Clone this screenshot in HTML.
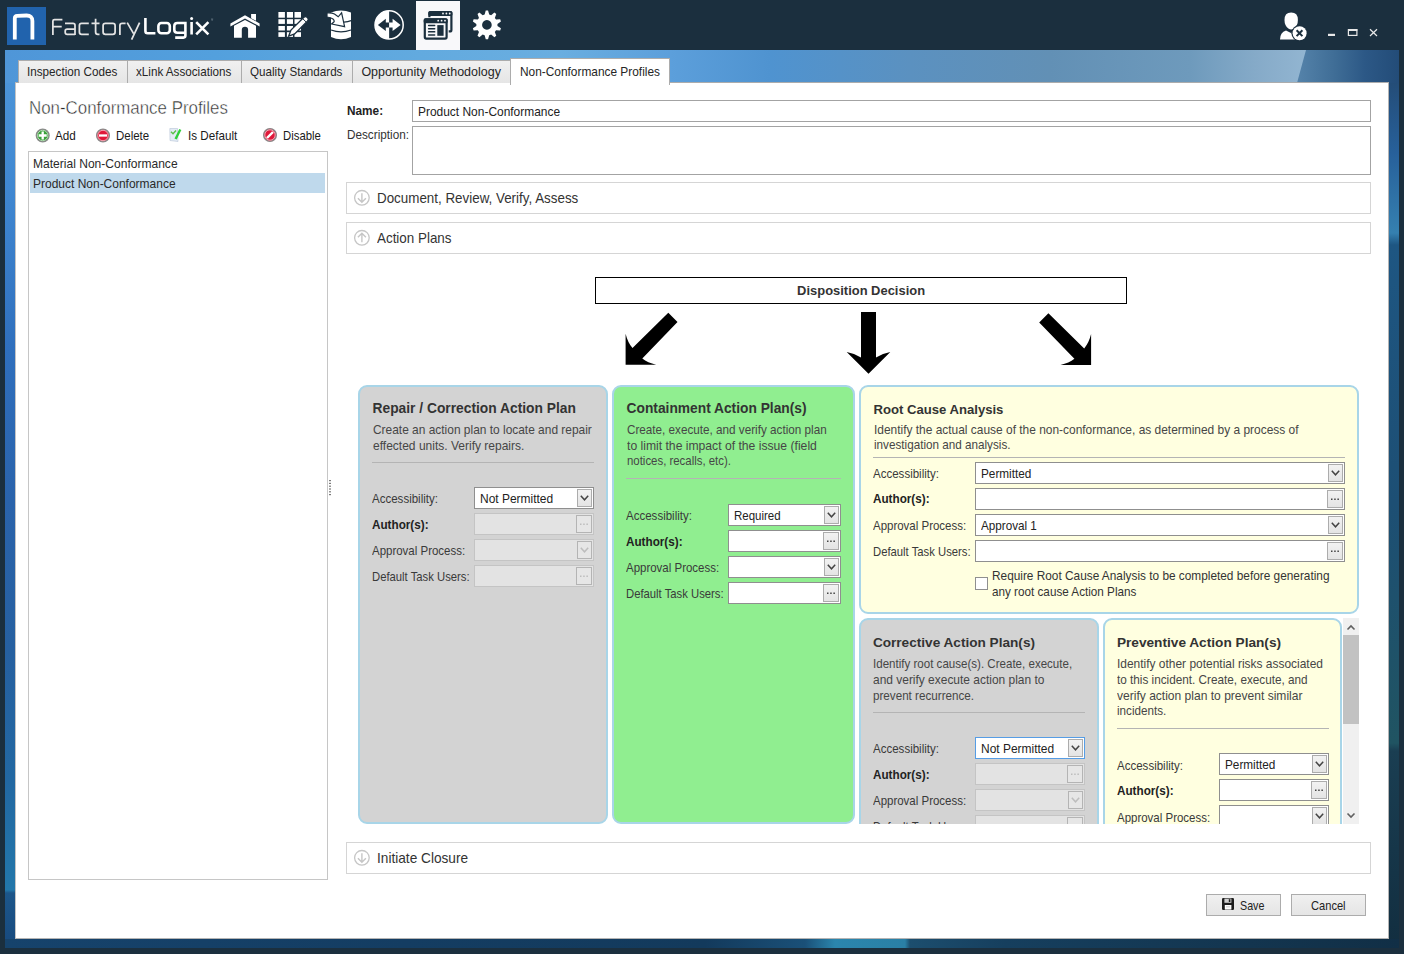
<!DOCTYPE html><html><head><meta charset="utf-8"><style>
html,body{margin:0;padding:0;width:1404px;height:954px;overflow:hidden;background:#1b2f3e;}
body{position:relative;font-family:"Liberation Sans",sans-serif;}
.t{position:absolute;white-space:nowrap;}
.r{position:absolute;box-sizing:content-box;}
svg{display:block}
</style></head><body>
<div class="r" style="left:5px;top:50px;width:10px;height:898px;background:linear-gradient(180deg, #4f98da 0px, #3f86d0 150px, #2f6fbd 300px, #2a63ab 450px, #2660a0 600px, #2268a2 730px, #2277aa 840px, #1c568a 843px, #17497e 898px);"></div>
<div class="r" style="left:5px;top:50px;width:1394px;height:33px;background:linear-gradient(90deg,#4f96d8 0px,#53a0dd 210px,#62aadf 415px,#6aaee0 555px,#5c9fdb 665px,#4f93d0 765px,#5b91c0 905px,#6290b5 1045px,#6e9abc 1185px,#85aac8 1250px,#92b5d1 1300px);"></div>
<div class="r" style="left:5px;top:50px;width:1394px;height:33px;clip-path:polygon(1301px 0,1394px 0,1394px 33px,1292px 33px);background:linear-gradient(90deg,#5583aa 1292px,#3f6d96 1330px,#2c5886 1360px,#234c78 1394px);"></div>
<div class="r" style="left:1389px;top:83px;width:10px;height:865px;background:linear-gradient(180deg,#244d78 0px,#27609a 70px,#3580b0 150px,#1e5682 162px,#1d4f74 420px,#205462 660px,#1a3e52 668px,#122e40 865px);"></div>
<div class="r" style="left:5px;top:939px;width:1394px;height:9px;background:linear-gradient(90deg,#16436c 0px,#143d62 400px,#133a5c 700px,#1a5078 800px,#2b86ad 830px,#2a80a6 900px,#1c4e6e 905px,#163f5e 1000px,#112f46 1394px);"></div>
<div class="r" style="left:15px;top:82px;width:1372px;height:855px;border:1px solid #b4b4b4;border-left-color:#c4c4c4;border-top-color:#acacac;background:#fff;"></div>
<div class="r" style="left:18px;top:60px;width:108px;height:22px;border:1px solid #acacac;border-bottom:none;border-right:none;background:linear-gradient(#f0f0f0,#e5e5e5);"></div>
<div class="t" style="left:27.3px;top:65.91px;font-size:12.46px;line-height:12.46px;font-weight:normal;color:#262626;transform:scaleX(0.9387);transform-origin:0 0;">Inspection Codes</div>
<div class="r" style="left:127px;top:60px;width:113px;height:22px;border:1px solid #acacac;border-bottom:none;border-right:none;background:linear-gradient(#f0f0f0,#e5e5e5);"></div>
<div class="t" style="left:135.9px;top:65.91px;font-size:12.46px;line-height:12.46px;font-weight:normal;color:#262626;transform:scaleX(0.9368);transform-origin:0 0;">xLink Associations</div>
<div class="r" style="left:241px;top:60px;width:110px;height:22px;border:1px solid #acacac;border-bottom:none;border-right:none;background:linear-gradient(#f0f0f0,#e5e5e5);"></div>
<div class="t" style="left:250.3px;top:65.91px;font-size:12.46px;line-height:12.46px;font-weight:normal;color:#262626;transform:scaleX(0.9337);transform-origin:0 0;">Quality Standards</div>
<div class="r" style="left:352px;top:60px;width:157px;height:22px;border:1px solid #acacac;border-bottom:none;border-right:none;background:linear-gradient(#f0f0f0,#e5e5e5);"></div>
<div class="t" style="left:361.4px;top:65.88px;font-size:12.49px;line-height:12.49px;font-weight:normal;color:#262626;">Opportunity Methodology</div>
<div class="r" style="left:510px;top:58px;width:158px;height:26px;border:1px solid #acacac;border-bottom:none;background:#fff;"></div>
<div class="t" style="left:519.7px;top:66.01px;font-size:12.46px;line-height:12.46px;font-weight:normal;color:#262626;transform:scaleX(0.9540);transform-origin:0 0;">Non-Conformance Profiles</div>
<svg class="r" style="left:0;top:0" width="1404" height="50" viewBox="0 0 1404 50">
<rect x="7" y="7" width="39" height="38" fill="#2163ad"/>
<path d="M14.8 39.6 V18.2 Q14.8 15.9 17.2 15.8 L26.5 15.5 Q32.4 15.4 32.4 21 V39.6" fill="none" stroke="#fff" stroke-width="3.8"/>
<!-- FactoryLogix -->
<g fill="none" stroke="#e4e4e4" stroke-width="1.75" stroke-linecap="butt">
<path d="M52.9 35.1 V21 Q52.9 19.5 54.5 19.5 H62.4 M52.9 26.7 H61.7"/>
<path d="M65 23.3 H73 Q75 23.3 75 25.3 V35.1 M75 29 H67.3 Q65.2 29 65.2 31 V32.2 Q65.2 34.3 67.3 34.3 H75"/>
<path d="M88.8 23.3 H81.6 Q79.4 23.3 79.4 25.6 V32 Q79.4 34.3 81.6 34.3 H88.8"/>
<path d="M95.6 18.7 V32 Q95.6 34.3 97.8 34.3 H99.5 M91.5 23.3 H99.5"/>
<rect x="103.1" y="23.3" width="12" height="11" rx="2.3"/>
<path d="M119.9 35.1 V25.6 Q119.9 23.3 122.2 23.3 H125.6"/>
<path d="M127.2 22.6 L133.6 33.6 M139.6 22.6 L131.6 39.6"/>
</g>
<g fill="none" stroke="#fff" stroke-width="2.6">
<path d="M145.4 18 V31 Q145.4 33.2 147.6 33.2 H155.4"/>
<rect x="158.4" y="23" width="11.4" height="10.2" rx="3"/>
<path d="M185.4 32.8 H177.4 Q174.3 32.8 174.3 29.7 V26 Q174.3 23 177.4 23 H185.4 V35.6 Q185.4 37.6 183.4 37.6 H175.2"/>
<path d="M191.6 22 V34.5"/>
<path d="M196.2 22.2 L208.4 34.4 M208.4 22.2 L196.2 34.4"/>
</g>
<circle cx="191.6" cy="18.6" r="1.5" fill="#fff"/>
<path d="M211 19 H213.2 M212.1 19 V21" stroke="#8a9aa6" stroke-width="0.5"/>
<!-- house -->
<g fill="#fff">
<path d="M230.4 23.5 L245 15.2 L259.6 23.5 V26.4 L245 18.5 L230.4 26.4 Z"/>
<path d="M251.1 13.9 H256 V20.8 L251.1 18.2 Z"/>
<path d="M234 37.8 V25.7 L245 20.1 L256 25.7 V37.8 H248.1 V29.7 Q248.1 26.7 245 26.7 Q241.8 26.7 241.8 29.7 V37.8 Z"/>
</g>
<!-- grid with pencil -->
<g fill="#fff">
<rect x="278.4" y="12" width="6.5" height="5.7"/><rect x="286.9" y="12" width="6.1" height="5.7"/><rect x="294.5" y="12" width="6.5" height="5.7"/>
<rect x="278.4" y="19.2" width="6.5" height="4.7"/><rect x="286.9" y="19.2" width="6.1" height="4.7"/><rect x="294.5" y="19.2" width="6.5" height="4.7"/>
<rect x="278.4" y="26" width="6.5" height="4.5"/><rect x="286.9" y="26" width="6.1" height="4.5"/><rect x="294.5" y="26" width="6.5" height="4.5"/>
<rect x="278.4" y="32.2" width="6.5" height="4.7"/><rect x="286.9" y="32.2" width="6.1" height="4.7"/><rect x="294.5" y="32.2" width="6.5" height="4.7"/>
</g>
<path d="M288.6 36.2 L290.96 30.16 L303.66 17.46 Q305.5 15.6 307.34 17.46 Q309.2 19.3 307.34 21.14 L294.64 33.84 Z" fill="#fff" stroke="#1b2f3e" stroke-width="1.3"/>
<path d="M302.6 18.5 L306.3 22.2" stroke="#1b2f3e" stroke-width="1"/>
<!-- database with arrow -->
<path d="M331 12.6 Q341 8.2 351 12.6 V37 Q341 41.5 331 37 Z" fill="#fff"/>
<path d="M331 30 Q341 33.6 351 30" fill="none" stroke="#1b2f3e" stroke-width="1.3"/>
<path d="M344 22.2 Q348 21.6 351 20.6" fill="none" stroke="#1b2f3e" stroke-width="1.3"/>
<path d="M327 12.9 Q331.5 12.5 334.5 14 L338.2 16.8 L341.6 12.8 L344.6 26.7 L331.6 24 L334.2 21.8 Q334.4 20 333 19 Q330.5 17.2 327 17 Z" fill="#fff" stroke="#1b2f3e" stroke-width="1.2"/>
<!-- circle arrows -->
<circle cx="389.1" cy="24.9" r="14.1" fill="#1b2f3e" stroke="#fff" stroke-width="1.5"/>
<path d="M389.1 10.8 A14.1 14.1 0 0 0 389.1 39 Z" fill="#fff"/>
<path d="M377.9 24.9 L385.8 18.8 V22.4 H389.1 V27.4 H385.8 V31 Z" fill="#1b2f3e"/>
<path d="M400.6 24.9 L392.6 18.8 V22.4 H389.1 V27.4 H392.6 V31 Z" fill="#fff"/>
<!-- selected button -->
<rect x="416" y="1" width="44" height="49" fill="#f8f8fa"/>
<rect x="429.4" y="12" width="22" height="19.4" rx="1.5" fill="none" stroke="#1b2f3e" stroke-width="2.2"/>
<rect x="428.3" y="11" width="24.1" height="5" rx="1.5" fill="#1b2f3e"/>
<rect x="422.7" y="17.2" width="26" height="23.5" rx="2" fill="#f8f8fa"/>
<rect x="424.8" y="19.3" width="21.8" height="19.3" rx="1.5" fill="none" stroke="#1b2f3e" stroke-width="2.2"/>
<rect x="423.7" y="18.2" width="24" height="5" rx="1.5" fill="#1b2f3e"/>
<g fill="#1b2f3e"><rect x="427.9" y="24.8" width="7.5" height="1.5" rx="0.7"/><rect x="427.9" y="27.9" width="7.5" height="1.5" rx="0.7"/><rect x="427.9" y="31.1" width="7.5" height="1.5" rx="0.7"/><rect x="427.9" y="34.2" width="7.5" height="1.5" rx="0.7"/><rect x="437.3" y="25.1" width="6.3" height="10.7"/></g>
<g fill="#f8f8fa"><circle cx="438.2" cy="20.7" r="0.9"/><circle cx="441.6" cy="20.7" r="0.9"/><circle cx="445" cy="20.7" r="0.9"/><circle cx="443" cy="13.5" r="0.9"/><circle cx="446.4" cy="13.5" r="0.9"/><circle cx="449.7" cy="13.5" r="0.9"/></g>
<!-- gear -->
<g transform="translate(486.9 24.9)">
<path fill="#fff" fill-rule="evenodd" d="M-2.29 -10.35 L-1.15 -14.35 L1.15 -14.35 L2.29 -10.35 L4.23 -9.72 L7.50 -12.29 L9.37 -10.93 L7.94 -7.02 L9.13 -5.38 L13.29 -5.53 L14.01 -3.34 L10.55 -1.02 L10.55 1.02 L14.01 3.34 L13.29 5.53 L9.13 5.38 L7.94 7.02 L9.37 10.93 L7.50 12.29 L4.23 9.72 L2.29 10.35 L1.15 14.35 L-1.15 14.35 L-2.29 10.35 L-4.23 9.72 L-7.50 12.29 L-9.37 10.93 L-7.94 7.02 L-9.13 5.38 L-13.29 5.53 L-14.01 3.34 L-10.55 1.02 L-10.55 -1.02 L-14.01 -3.34 L-13.29 -5.53 L-9.13 -5.38 L-7.94 -7.02 L-9.37 -10.93 L-7.50 -12.29 L-4.23 -9.72 Z M0 -4.8 A4.8 4.8 0 1 0 0.01 -4.8 Z"/>
</g>
<!-- user -->
<path d="M1291.2 12.6 Q1297.9 12.6 1297.9 20 Q1297.9 25.5 1294 28.6 Q1291.2 30.6 1288.4 28.6 Q1284.5 25.5 1284.5 20 Q1284.5 12.6 1291.2 12.6 Z" fill="#fff"/>
<path d="M1280 39.6 Q1280 32.5 1286 30.5 L1291 33 L1296 30.5 Q1300 31.5 1301 34 L1301 39.6 Z" fill="#fff"/>
<circle cx="1299.6" cy="33.2" r="8.2" fill="#1b2f3e"/>
<circle cx="1299.6" cy="33.2" r="7" fill="#fff"/>
<path d="M1296.6 30.3 L1302.4 36.1 M1302.4 30.3 L1296.6 36.1" stroke="#1b2f3e" stroke-width="2"/>
<!-- window controls -->
<rect x="1328" y="33.8" width="7" height="2.2" fill="#e8e8e8"/>
<rect x="1348.4" y="29.6" width="8.5" height="5.8" fill="none" stroke="#e8e8e8" stroke-width="1.2"/>
<rect x="1348" y="29" width="9.3" height="2" fill="#e8e8e8"/>
<path d="M1370 29.3 L1377 36 M1377 29.3 L1370 36" stroke="#e8e8e8" stroke-width="1.2"/>
</svg>
<div class="t" style="left:28.6px;top:99.40px;font-size:18.12px;line-height:18.12px;font-weight:normal;color:#2a2a2a;transform:scaleX(0.9323);transform-origin:0 0;-webkit-text-stroke:0.45px #fff;">Non-Conformance Profiles</div>
<svg class="r" style="left:30px;top:124px" width="300" height="24" viewBox="30 124 300 24">
<circle cx="42.7" cy="135.5" r="6.4" fill="#3aa13a" stroke="#8a8a8a" stroke-width="1.3"/>
<circle cx="42.7" cy="135.5" r="5.2" fill="none" stroke="#fff" stroke-width="0.6"/>
<path d="M42.7 131.5 V139.5 M38.7 135.5 H46.7" stroke="#fff" stroke-width="2.3"/>
<circle cx="103" cy="135.5" r="6.4" fill="#e0193a" stroke="#8a8a8a" stroke-width="1.3"/>
<circle cx="103" cy="135.5" r="5.2" fill="none" stroke="#fff" stroke-width="0.6"/>
<path d="M99 135.5 H107" stroke="#fff" stroke-width="2.3"/>
<path d="M169.8 128.5 L177.5 128.5 L178 141.5 L170 140.5 Z" fill="#e3ebf5" stroke="#b7c4d6" stroke-width="0.6"/>
<path d="M171 131.8 L173 133.8 L176 130.5" fill="none" stroke="#5bc04a" stroke-width="1.4"/>
<path d="M180.3 129.5 L175.6 139" stroke="#2fcf3a" stroke-width="2.4"/>
<circle cx="270" cy="135" r="6.4" fill="#e0193a" stroke="#8a8a8a" stroke-width="1.3"/>
<circle cx="270" cy="135" r="5.2" fill="none" stroke="#fff" stroke-width="0.6"/>
<path d="M267 138 L273 132" stroke="#fff" stroke-width="2.4"/>
</svg>
<div class="t" style="left:55.3px;top:129.71px;font-size:12.46px;line-height:12.46px;font-weight:normal;color:#1a1a1a;transform:scaleX(0.9380);transform-origin:0 0;">Add</div>
<div class="t" style="left:115.6px;top:129.71px;font-size:12.46px;line-height:12.46px;font-weight:normal;color:#1a1a1a;transform:scaleX(0.9216);transform-origin:0 0;">Delete</div>
<div class="t" style="left:187.6px;top:129.71px;font-size:12.46px;line-height:12.46px;font-weight:normal;color:#1a1a1a;transform:scaleX(0.9364);transform-origin:0 0;">Is Default</div>
<div class="t" style="left:282.8px;top:129.71px;font-size:12.46px;line-height:12.46px;font-weight:normal;color:#1a1a1a;transform:scaleX(0.9118);transform-origin:0 0;">Disable</div>
<div class="r" style="left:28px;top:151px;width:298px;height:727px;border:1px solid #c6c6c6;background:#fff;"></div>
<div class="r" style="left:30px;top:173px;width:295px;height:20px;background:#bfd9ec;"></div>
<div class="t" style="left:33.3px;top:157.81px;font-size:12.46px;line-height:12.46px;font-weight:normal;color:#2a2a2a;transform:scaleX(0.9671);transform-origin:0 0;">Material Non-Conformance</div>
<div class="t" style="left:33.3px;top:177.91px;font-size:12.46px;line-height:12.46px;font-weight:normal;color:#2a2a2a;transform:scaleX(0.9626);transform-origin:0 0;">Product Non-Conformance</div>
<svg class="r" style="left:329px;top:479px" width="3" height="17"><g fill="#7a7a7a"><rect x="0" y="1" width="2" height="1.2"/><rect x="0" y="3.8" width="2" height="1.2"/><rect x="0" y="6.6" width="2" height="1.2"/><rect x="0" y="9.4" width="2" height="1.2"/><rect x="0" y="12.2" width="2" height="1.2"/><rect x="0" y="15" width="2" height="1.2"/></g></svg>
<div class="t" style="left:346.8px;top:105.44px;font-size:12.9px;line-height:12.9px;font-weight:bold;color:#222;transform:scaleX(0.9157);transform-origin:0 0;">Name:</div>
<div class="r" style="left:412px;top:100px;width:957px;height:20px;border:1px solid #a3a3a3;background:#fff;"></div>
<div class="t" style="left:417.8px;top:105.81px;font-size:12.46px;line-height:12.46px;font-weight:normal;color:#222;transform:scaleX(0.9592);transform-origin:0 0;">Product Non-Conformance</div>
<div class="t" style="left:346.8px;top:128.81px;font-size:12.46px;line-height:12.46px;font-weight:normal;color:#333;transform:scaleX(0.9422);transform-origin:0 0;">Description:</div>
<div class="r" style="left:412px;top:126px;width:957px;height:47px;border:1px solid #a3a3a3;background:#fff;"></div>
<div class="r" style="left:346px;top:182px;width:1023px;height:30px;border:1px solid #d5d5d5;background:#fff;"></div>
<svg class="r" style="left:0;top:0" width="400" height="900"><circle cx="361.9" cy="197.8" r="7.3" fill="none" stroke="#c6c6c6" stroke-width="1.3"/><path d="M361.9 193.3 V202.3 M357.9 198.3 L361.9 202.3 L365.9 198.3" fill="none" stroke="#c6c6c6" stroke-width="1.4"/></svg>
<div class="t" style="left:376.5px;top:190.84px;font-size:14.78px;line-height:14.78px;font-weight:normal;color:#333;transform:scaleX(0.9062);transform-origin:0 0;">Document, Review, Verify, Assess</div>
<div class="r" style="left:346px;top:222px;width:1023px;height:30px;border:1px solid #d5d5d5;background:#fff;"></div>
<svg class="r" style="left:0;top:0" width="400" height="900"><circle cx="361.9" cy="237.8" r="7.3" fill="none" stroke="#c6c6c6" stroke-width="1.3"/><path d="M361.9 242.3 V233.3 M357.9 237.3 L361.9 233.3 L365.9 237.3" fill="none" stroke="#c6c6c6" stroke-width="1.4"/></svg>
<div class="t" style="left:376.5px;top:230.84px;font-size:14.78px;line-height:14.78px;font-weight:normal;color:#333;transform:scaleX(0.9079);transform-origin:0 0;">Action Plans</div>
<div class="r" style="left:346px;top:842px;width:1023px;height:30px;border:1px solid #d5d5d5;background:#fff;"></div>
<svg class="r" style="left:0;top:0" width="400" height="900"><circle cx="361.9" cy="857.8" r="7.3" fill="none" stroke="#c6c6c6" stroke-width="1.3"/><path d="M361.9 853.3 V862.3 M357.9 858.3 L361.9 862.3 L365.9 858.3" fill="none" stroke="#c6c6c6" stroke-width="1.4"/></svg>
<div class="t" style="left:376.5px;top:850.84px;font-size:14.78px;line-height:14.78px;font-weight:normal;color:#333;transform:scaleX(0.9250);transform-origin:0 0;">Initiate Closure</div>
<div class="r" style="left:595px;top:277px;width:530px;height:25px;border:1px solid #000;background:#fff;"></div>
<div class="t" style="left:797.1px;top:285.10px;font-size:12.94px;line-height:12.94px;font-weight:bold;color:#333;">Disposition Decision</div>
<svg class="r" style="left:0;top:0" width="1404" height="400">
<path d="M1048.4 313.2 L1084.2 348.4 Q1088.9 343.1 1091.1 334.1 L1091.1 365.1 L1060.5 365.1 Q1069.1 362.9 1074.4 358.8 L1039.2 322.4 Z" fill="#000"/>
<path d="M668.3 312.8 L632.5 348.0 Q627.8 342.7 625.6 333.7 L625.6 364.7 L656.2 364.7 Q647.6 362.5 642.3 358.4 L677.5 322.0 Z" fill="#000"/>
<path d="M861 312 H876 V357.5 Q882 353.5 890.3 352 L868.5 373.7 L846.7 352 Q855 353.5 861 357.5 Z" fill="#000"/>
</svg>
<div class="r" style="left:358px;top:385px;width:246px;height:435px;border:2px solid #a8d5e8;border-radius:9px;background:#d3d3d3;"></div>
<div class="t" style="left:372.5px;top:402.07px;font-size:13.8px;line-height:13.8px;font-weight:bold;color:#333;">Repair / Correction Action Plan</div>
<div class="t" style="left:372.5px;top:423.91px;font-size:12.46px;line-height:12.46px;font-weight:normal;color:#464646;transform:scaleX(0.9579);transform-origin:0 0;">Create an action plan to locate and repair</div>
<div class="t" style="left:372.5px;top:439.71px;font-size:12.46px;line-height:12.46px;font-weight:normal;color:#464646;transform:scaleX(0.9649);transform-origin:0 0;">effected units. Verify repairs.</div>
<div class="r" style="left:372px;top:462px;width:222px;height:1px;background:#b4b4b4;"></div>
<div class="t" style="left:372.4px;top:493.31px;font-size:12.46px;line-height:12.46px;font-weight:normal;color:#3a3a3a;transform:scaleX(0.9252);transform-origin:0 0;">Accessibility:</div>
<div class="t" style="left:372.4px;top:518.93px;font-size:12.9px;line-height:12.9px;font-weight:bold;color:#222;transform:scaleX(0.9082);transform-origin:0 0;">Author(s):</div>
<div class="t" style="left:372.4px;top:545.31px;font-size:12.46px;line-height:12.46px;font-weight:normal;color:#3a3a3a;transform:scaleX(0.9215);transform-origin:0 0;">Approval Process:</div>
<div class="t" style="left:372.4px;top:571.31px;font-size:12.46px;line-height:12.46px;font-weight:normal;color:#3a3a3a;transform:scaleX(0.9061);transform-origin:0 0;">Default Task Users:</div>
<div class="r" style="left:474px;top:487px;width:118px;height:20px;border:1px solid #8f8f8f;background:#fff;"></div>
<div class="r" style="left:577px;top:489px;width:13px;height:16px;border:1px solid #acacac;background:linear-gradient(#f2f2f2,#e4e4e4);overflow:hidden"><div style="position:absolute;left:-1px;top:-1px"><svg width="15" height="18" viewBox="0 0 15 18"><path d="M3.8 6.8 L7.5 10.8 L11.2 6.8" fill="none" stroke="#444" stroke-width="1.5"/></svg></div></div>
<div class="t" style="left:479.8px;top:492.91px;font-size:12.46px;line-height:12.46px;font-weight:normal;color:#222;transform:scaleX(0.9607);transform-origin:0 0;">Not Permitted</div>
<div class="r" style="left:474px;top:513px;width:118px;height:20px;border:1px solid #c4c4c4;background:#e3e3e3;"></div>
<div class="r" style="left:576px;top:515px;width:14px;height:16px;border:1px solid #b4b4b4;background:#e6e6e6;overflow:hidden"><div style="position:absolute;left:-1px;top:-1px"><svg width="16" height="18" viewBox="0 0 16 18"><g fill="#bdbdbd"><rect x="4" y="8.5" width="1.5" height="1.5"/><rect x="7.2" y="8.5" width="1.5" height="1.5"/><rect x="10.4" y="8.5" width="1.5" height="1.5"/></g></svg></div></div>
<div class="r" style="left:474px;top:539px;width:118px;height:20px;border:1px solid #c4c4c4;background:#e3e3e3;"></div>
<div class="r" style="left:577px;top:541px;width:13px;height:16px;border:1px solid #b4b4b4;background:#e6e6e6;overflow:hidden"><div style="position:absolute;left:-1px;top:-1px"><svg width="15" height="18" viewBox="0 0 15 18"><path d="M3.8 6.8 L7.5 10.8 L11.2 6.8" fill="none" stroke="#bdbdbd" stroke-width="1.5"/></svg></div></div>
<div class="r" style="left:474px;top:565px;width:118px;height:20px;border:1px solid #c4c4c4;background:#e3e3e3;"></div>
<div class="r" style="left:576px;top:567px;width:14px;height:16px;border:1px solid #b4b4b4;background:#e6e6e6;overflow:hidden"><div style="position:absolute;left:-1px;top:-1px"><svg width="16" height="18" viewBox="0 0 16 18"><g fill="#bdbdbd"><rect x="4" y="8.5" width="1.5" height="1.5"/><rect x="7.2" y="8.5" width="1.5" height="1.5"/><rect x="10.4" y="8.5" width="1.5" height="1.5"/></g></svg></div></div>
<div class="r" style="left:612px;top:385px;width:239px;height:435px;border:2px solid #a8d5e8;border-radius:9px;background:#90ee90;"></div>
<div class="t" style="left:626.6px;top:402.09px;font-size:13.78px;line-height:13.78px;font-weight:bold;color:#333;">Containment Action Plan(s)</div>
<div class="t" style="left:626.6px;top:423.91px;font-size:12.46px;line-height:12.46px;font-weight:normal;color:#464646;transform:scaleX(0.9394);transform-origin:0 0;">Create, execute, and verify action plan</div>
<div class="t" style="left:626.6px;top:439.61px;font-size:12.46px;line-height:12.46px;font-weight:normal;color:#464646;transform:scaleX(0.9761);transform-origin:0 0;">to limit the impact of the issue (field</div>
<div class="t" style="left:626.6px;top:455.31px;font-size:12.46px;line-height:12.46px;font-weight:normal;color:#464646;transform:scaleX(0.9156);transform-origin:0 0;">notices, recalls, etc).</div>
<div class="r" style="left:626px;top:478px;width:215px;height:1px;background:#b4b4b4;"></div>
<div class="t" style="left:626.4px;top:509.91px;font-size:12.46px;line-height:12.46px;font-weight:normal;color:#3a3a3a;transform:scaleX(0.9252);transform-origin:0 0;">Accessibility:</div>
<div class="t" style="left:626.4px;top:535.53px;font-size:12.9px;line-height:12.9px;font-weight:bold;color:#222;transform:scaleX(0.9082);transform-origin:0 0;">Author(s):</div>
<div class="t" style="left:626.4px;top:561.91px;font-size:12.46px;line-height:12.46px;font-weight:normal;color:#3a3a3a;transform:scaleX(0.9215);transform-origin:0 0;">Approval Process:</div>
<div class="t" style="left:626.4px;top:587.91px;font-size:12.46px;line-height:12.46px;font-weight:normal;color:#3a3a3a;transform:scaleX(0.9061);transform-origin:0 0;">Default Task Users:</div>
<div class="r" style="left:728px;top:504px;width:111px;height:20px;border:1px solid #8f8f8f;background:#fff;"></div>
<div class="r" style="left:824px;top:506px;width:13px;height:16px;border:1px solid #acacac;background:linear-gradient(#f2f2f2,#e4e4e4);overflow:hidden"><div style="position:absolute;left:-1px;top:-1px"><svg width="15" height="18" viewBox="0 0 15 18"><path d="M3.8 6.8 L7.5 10.8 L11.2 6.8" fill="none" stroke="#444" stroke-width="1.5"/></svg></div></div>
<div class="t" style="left:733.8px;top:509.91px;font-size:12.46px;line-height:12.46px;font-weight:normal;color:#222;transform:scaleX(0.9214);transform-origin:0 0;">Required</div>
<div class="r" style="left:728px;top:530px;width:111px;height:20px;border:1px solid #8f8f8f;background:#fff;"></div>
<div class="r" style="left:823px;top:532px;width:14px;height:16px;border:1px solid #acacac;background:linear-gradient(#f2f2f2,#e4e4e4);overflow:hidden"><div style="position:absolute;left:-1px;top:-1px"><svg width="16" height="18" viewBox="0 0 16 18"><g fill="#444"><rect x="4" y="8.5" width="1.5" height="1.5"/><rect x="7.2" y="8.5" width="1.5" height="1.5"/><rect x="10.4" y="8.5" width="1.5" height="1.5"/></g></svg></div></div>
<div class="r" style="left:728px;top:556px;width:111px;height:20px;border:1px solid #8f8f8f;background:#fff;"></div>
<div class="r" style="left:824px;top:558px;width:13px;height:16px;border:1px solid #acacac;background:linear-gradient(#f2f2f2,#e4e4e4);overflow:hidden"><div style="position:absolute;left:-1px;top:-1px"><svg width="15" height="18" viewBox="0 0 15 18"><path d="M3.8 6.8 L7.5 10.8 L11.2 6.8" fill="none" stroke="#444" stroke-width="1.5"/></svg></div></div>
<div class="r" style="left:728px;top:582px;width:111px;height:20px;border:1px solid #8f8f8f;background:#fff;"></div>
<div class="r" style="left:823px;top:584px;width:14px;height:16px;border:1px solid #acacac;background:linear-gradient(#f2f2f2,#e4e4e4);overflow:hidden"><div style="position:absolute;left:-1px;top:-1px"><svg width="16" height="18" viewBox="0 0 16 18"><g fill="#444"><rect x="4" y="8.5" width="1.5" height="1.5"/><rect x="7.2" y="8.5" width="1.5" height="1.5"/><rect x="10.4" y="8.5" width="1.5" height="1.5"/></g></svg></div></div>
<div class="r" style="left:859px;top:385px;width:496px;height:225px;border:2px solid #a8d5e8;border-radius:9px;background:#ffffe0;"></div>
<div class="t" style="left:873.5px;top:403.05px;font-size:13.12px;line-height:13.12px;font-weight:bold;color:#333;">Root Cause Analysis</div>
<div class="t" style="left:873.5px;top:424.11px;font-size:12.46px;line-height:12.46px;font-weight:normal;color:#464646;transform:scaleX(0.9581);transform-origin:0 0;">Identify the actual cause of the non-conformance, as determined by a process of</div>
<div class="t" style="left:873.5px;top:439.41px;font-size:12.46px;line-height:12.46px;font-weight:normal;color:#464646;transform:scaleX(0.9389);transform-origin:0 0;">investigation and analysis.</div>
<div class="r" style="left:873px;top:457px;width:472px;height:1px;background:#b4b4b4;"></div>
<div class="t" style="left:873.0px;top:467.61px;font-size:12.46px;line-height:12.46px;font-weight:normal;color:#3a3a3a;transform:scaleX(0.9252);transform-origin:0 0;">Accessibility:</div>
<div class="t" style="left:873.0px;top:493.24px;font-size:12.9px;line-height:12.9px;font-weight:bold;color:#222;transform:scaleX(0.9082);transform-origin:0 0;">Author(s):</div>
<div class="t" style="left:873.0px;top:519.61px;font-size:12.46px;line-height:12.46px;font-weight:normal;color:#3a3a3a;transform:scaleX(0.9215);transform-origin:0 0;">Approval Process:</div>
<div class="t" style="left:873.0px;top:545.61px;font-size:12.46px;line-height:12.46px;font-weight:normal;color:#3a3a3a;transform:scaleX(0.9061);transform-origin:0 0;">Default Task Users:</div>
<div class="r" style="left:975px;top:462px;width:368px;height:20px;border:1px solid #8f8f8f;background:#fff;"></div>
<div class="r" style="left:1328px;top:464px;width:13px;height:16px;border:1px solid #acacac;background:linear-gradient(#f2f2f2,#e4e4e4);overflow:hidden"><div style="position:absolute;left:-1px;top:-1px"><svg width="15" height="18" viewBox="0 0 15 18"><path d="M3.8 6.8 L7.5 10.8 L11.2 6.8" fill="none" stroke="#444" stroke-width="1.5"/></svg></div></div>
<div class="t" style="left:980.8px;top:467.91px;font-size:12.46px;line-height:12.46px;font-weight:normal;color:#222;transform:scaleX(0.9450);transform-origin:0 0;">Permitted</div>
<div class="r" style="left:975px;top:488px;width:368px;height:20px;border:1px solid #8f8f8f;background:#fff;"></div>
<div class="r" style="left:1327px;top:490px;width:14px;height:16px;border:1px solid #acacac;background:linear-gradient(#f2f2f2,#e4e4e4);overflow:hidden"><div style="position:absolute;left:-1px;top:-1px"><svg width="16" height="18" viewBox="0 0 16 18"><g fill="#444"><rect x="4" y="8.5" width="1.5" height="1.5"/><rect x="7.2" y="8.5" width="1.5" height="1.5"/><rect x="10.4" y="8.5" width="1.5" height="1.5"/></g></svg></div></div>
<div class="r" style="left:975px;top:514px;width:368px;height:20px;border:1px solid #8f8f8f;background:#fff;"></div>
<div class="r" style="left:1328px;top:516px;width:13px;height:16px;border:1px solid #acacac;background:linear-gradient(#f2f2f2,#e4e4e4);overflow:hidden"><div style="position:absolute;left:-1px;top:-1px"><svg width="15" height="18" viewBox="0 0 15 18"><path d="M3.8 6.8 L7.5 10.8 L11.2 6.8" fill="none" stroke="#444" stroke-width="1.5"/></svg></div></div>
<div class="t" style="left:980.8px;top:519.91px;font-size:12.46px;line-height:12.46px;font-weight:normal;color:#222;transform:scaleX(0.9382);transform-origin:0 0;">Approval 1</div>
<div class="r" style="left:975px;top:540px;width:368px;height:20px;border:1px solid #8f8f8f;background:#fff;"></div>
<div class="r" style="left:1327px;top:542px;width:14px;height:16px;border:1px solid #acacac;background:linear-gradient(#f2f2f2,#e4e4e4);overflow:hidden"><div style="position:absolute;left:-1px;top:-1px"><svg width="16" height="18" viewBox="0 0 16 18"><g fill="#444"><rect x="4" y="8.5" width="1.5" height="1.5"/><rect x="7.2" y="8.5" width="1.5" height="1.5"/><rect x="10.4" y="8.5" width="1.5" height="1.5"/></g></svg></div></div>
<div class="r" style="left:975px;top:577px;width:11px;height:11px;border:1px solid #8f8f8f;background:#fff;"></div>
<div class="t" style="left:992.0px;top:570.21px;font-size:12.46px;line-height:12.46px;font-weight:normal;color:#333;transform:scaleX(0.9504);transform-origin:0 0;">Require Root Cause Analysis to be completed before generating</div>
<div class="t" style="left:992.0px;top:585.51px;font-size:12.46px;line-height:12.46px;font-weight:normal;color:#333;transform:scaleX(0.9395);transform-origin:0 0;">any root cause Action Plans</div>
<div class="r" style="left:0;top:0;width:1404px;height:954px;clip-path:inset(616px 45px 130px 855px)">
<div class="r" style="left:859px;top:618px;width:236px;height:256px;border:2px solid #a8d5e8;border-radius:9px;background:#d3d3d3;"></div>
<div class="t" style="left:872.9px;top:635.83px;font-size:13.61px;line-height:13.61px;font-weight:bold;color:#333;">Corrective Action Plan(s)</div>
<div class="t" style="left:872.9px;top:657.91px;font-size:12.46px;line-height:12.46px;font-weight:normal;color:#464646;transform:scaleX(0.9281);transform-origin:0 0;">Identify root cause(s). Create, execute,</div>
<div class="t" style="left:872.9px;top:673.71px;font-size:12.46px;line-height:12.46px;font-weight:normal;color:#464646;transform:scaleX(0.9595);transform-origin:0 0;">and verify execute action plan to</div>
<div class="t" style="left:872.9px;top:689.51px;font-size:12.46px;line-height:12.46px;font-weight:normal;color:#464646;transform:scaleX(0.9356);transform-origin:0 0;">prevent recurrence.</div>
<div class="r" style="left:873px;top:712px;width:212px;height:1px;background:#b4b4b4;"></div>
<div class="t" style="left:872.8px;top:743.31px;font-size:12.46px;line-height:12.46px;font-weight:normal;color:#3a3a3a;transform:scaleX(0.9252);transform-origin:0 0;">Accessibility:</div>
<div class="t" style="left:872.8px;top:768.93px;font-size:12.9px;line-height:12.9px;font-weight:bold;color:#222;transform:scaleX(0.9082);transform-origin:0 0;">Author(s):</div>
<div class="t" style="left:872.8px;top:795.31px;font-size:12.46px;line-height:12.46px;font-weight:normal;color:#3a3a3a;transform:scaleX(0.9215);transform-origin:0 0;">Approval Process:</div>
<div class="t" style="left:872.8px;top:821.31px;font-size:12.46px;line-height:12.46px;font-weight:normal;color:#3a3a3a;transform:scaleX(0.9061);transform-origin:0 0;">Default Task Users:</div>
<div class="r" style="left:975px;top:737px;width:108px;height:20px;border:1px solid #569de5;background:#fff;"></div>
<div class="r" style="left:1068px;top:739px;width:13px;height:16px;border:1px solid #acacac;background:linear-gradient(#f2f2f2,#e4e4e4);overflow:hidden"><div style="position:absolute;left:-1px;top:-1px"><svg width="15" height="18" viewBox="0 0 15 18"><path d="M3.8 6.8 L7.5 10.8 L11.2 6.8" fill="none" stroke="#444" stroke-width="1.5"/></svg></div></div>
<div class="t" style="left:980.8px;top:742.91px;font-size:12.46px;line-height:12.46px;font-weight:normal;color:#222;transform:scaleX(0.9607);transform-origin:0 0;">Not Permitted</div>
<div class="r" style="left:975px;top:763px;width:108px;height:20px;border:1px solid #c4c4c4;background:#e3e3e3;"></div>
<div class="r" style="left:1067px;top:765px;width:14px;height:16px;border:1px solid #b4b4b4;background:#e6e6e6;overflow:hidden"><div style="position:absolute;left:-1px;top:-1px"><svg width="16" height="18" viewBox="0 0 16 18"><g fill="#bdbdbd"><rect x="4" y="8.5" width="1.5" height="1.5"/><rect x="7.2" y="8.5" width="1.5" height="1.5"/><rect x="10.4" y="8.5" width="1.5" height="1.5"/></g></svg></div></div>
<div class="r" style="left:975px;top:789px;width:108px;height:20px;border:1px solid #c4c4c4;background:#e3e3e3;"></div>
<div class="r" style="left:1068px;top:791px;width:13px;height:16px;border:1px solid #b4b4b4;background:#e6e6e6;overflow:hidden"><div style="position:absolute;left:-1px;top:-1px"><svg width="15" height="18" viewBox="0 0 15 18"><path d="M3.8 6.8 L7.5 10.8 L11.2 6.8" fill="none" stroke="#bdbdbd" stroke-width="1.5"/></svg></div></div>
<div class="r" style="left:975px;top:815px;width:108px;height:20px;border:1px solid #c4c4c4;background:#e3e3e3;"></div>
<div class="r" style="left:1067px;top:817px;width:14px;height:16px;border:1px solid #b4b4b4;background:#e6e6e6;overflow:hidden"><div style="position:absolute;left:-1px;top:-1px"><svg width="16" height="18" viewBox="0 0 16 18"><g fill="#bdbdbd"><rect x="4" y="8.5" width="1.5" height="1.5"/><rect x="7.2" y="8.5" width="1.5" height="1.5"/><rect x="10.4" y="8.5" width="1.5" height="1.5"/></g></svg></div></div>
<div class="r" style="left:1103px;top:618px;width:235px;height:256px;border:2px solid #a8d5e8;border-radius:9px;background:#ffffe0;"></div>
<div class="t" style="left:1116.9px;top:635.78px;font-size:13.67px;line-height:13.67px;font-weight:bold;color:#333;">Preventive Action Plan(s)</div>
<div class="t" style="left:1116.9px;top:657.91px;font-size:12.46px;line-height:12.46px;font-weight:normal;color:#464646;transform:scaleX(0.9597);transform-origin:0 0;">Identify other potential risks associated</div>
<div class="t" style="left:1116.9px;top:673.71px;font-size:12.46px;line-height:12.46px;font-weight:normal;color:#464646;transform:scaleX(0.9432);transform-origin:0 0;">to this incident. Create, execute, and</div>
<div class="t" style="left:1116.9px;top:689.51px;font-size:12.46px;line-height:12.46px;font-weight:normal;color:#464646;transform:scaleX(0.9673);transform-origin:0 0;">verify action plan to prevent similar</div>
<div class="t" style="left:1116.9px;top:705.31px;font-size:12.46px;line-height:12.46px;font-weight:normal;color:#464646;transform:scaleX(0.9363);transform-origin:0 0;">incidents.</div>
<div class="r" style="left:1117px;top:728px;width:212px;height:1px;background:#b4b4b4;"></div>
<div class="t" style="left:1116.9px;top:759.51px;font-size:12.46px;line-height:12.46px;font-weight:normal;color:#3a3a3a;transform:scaleX(0.9252);transform-origin:0 0;">Accessibility:</div>
<div class="t" style="left:1116.9px;top:785.13px;font-size:12.9px;line-height:12.9px;font-weight:bold;color:#222;transform:scaleX(0.9082);transform-origin:0 0;">Author(s):</div>
<div class="t" style="left:1116.9px;top:811.51px;font-size:12.46px;line-height:12.46px;font-weight:normal;color:#3a3a3a;transform:scaleX(0.9215);transform-origin:0 0;">Approval Process:</div>
<div class="t" style="left:1116.9px;top:837.51px;font-size:12.46px;line-height:12.46px;font-weight:normal;color:#3a3a3a;transform:scaleX(0.9061);transform-origin:0 0;">Default Task Users:</div>
<div class="r" style="left:1219px;top:753px;width:108px;height:20px;border:1px solid #8f8f8f;background:#fff;"></div>
<div class="r" style="left:1312px;top:755px;width:13px;height:16px;border:1px solid #acacac;background:linear-gradient(#f2f2f2,#e4e4e4);overflow:hidden"><div style="position:absolute;left:-1px;top:-1px"><svg width="15" height="18" viewBox="0 0 15 18"><path d="M3.8 6.8 L7.5 10.8 L11.2 6.8" fill="none" stroke="#444" stroke-width="1.5"/></svg></div></div>
<div class="t" style="left:1224.8px;top:758.91px;font-size:12.46px;line-height:12.46px;font-weight:normal;color:#222;transform:scaleX(0.9450);transform-origin:0 0;">Permitted</div>
<div class="r" style="left:1219px;top:779px;width:108px;height:20px;border:1px solid #8f8f8f;background:#fff;"></div>
<div class="r" style="left:1311px;top:781px;width:14px;height:16px;border:1px solid #acacac;background:linear-gradient(#f2f2f2,#e4e4e4);overflow:hidden"><div style="position:absolute;left:-1px;top:-1px"><svg width="16" height="18" viewBox="0 0 16 18"><g fill="#444"><rect x="4" y="8.5" width="1.5" height="1.5"/><rect x="7.2" y="8.5" width="1.5" height="1.5"/><rect x="10.4" y="8.5" width="1.5" height="1.5"/></g></svg></div></div>
<div class="r" style="left:1219px;top:805px;width:108px;height:20px;border:1px solid #8f8f8f;background:#fff;"></div>
<div class="r" style="left:1312px;top:807px;width:13px;height:16px;border:1px solid #acacac;background:linear-gradient(#f2f2f2,#e4e4e4);overflow:hidden"><div style="position:absolute;left:-1px;top:-1px"><svg width="15" height="18" viewBox="0 0 15 18"><path d="M3.8 6.8 L7.5 10.8 L11.2 6.8" fill="none" stroke="#444" stroke-width="1.5"/></svg></div></div>
</div>
<div class="r" style="left:1343px;top:618px;width:16px;height:206px;background:#f0f0f0;"></div>
<div class="r" style="left:1343px;top:635px;width:16px;height:89px;background:#c2c2c2;"></div>
<svg class="r" style="left:1343px;top:618px" width="16" height="206"><path d="M4.5 11.5 L8 8 L11.5 11.5" fill="none" stroke="#606060" stroke-width="1.6"/><path d="M4.5 195.5 L8 199 L11.5 195.5" fill="none" stroke="#606060" stroke-width="1.6"/></svg>
<div class="r" style="left:1206px;top:894px;width:73px;height:20px;border:1px solid #acacac;background:linear-gradient(#f0f0f0,#e5e5e5);"></div>
<div class="r" style="left:1291px;top:894px;width:73px;height:20px;border:1px solid #acacac;background:linear-gradient(#f0f0f0,#e5e5e5);"></div>
<svg class="r" style="left:1222px;top:898px" width="12" height="12" viewBox="0 0 12 12">
<rect x="0" y="0" width="12" height="12" rx="1.3" fill="#1e1e1e"/>
<rect x="2.4" y="0.6" width="7" height="4.2" fill="#cfcfcf"/>
<rect x="6.8" y="1.2" width="1.6" height="2.8" fill="#1e1e1e"/>
<rect x="2.8" y="7" width="6.6" height="4.6" fill="#fff"/>
<rect x="4" y="8.6" width="4" height="0.6" fill="#aaa"/>
</svg>
<div class="t" style="left:1240.4px;top:899.91px;font-size:12.46px;line-height:12.46px;font-weight:normal;color:#222;transform:scaleX(0.8589);transform-origin:0 0;">Save</div>
<div class="t" style="left:1311.2px;top:899.91px;font-size:12.46px;line-height:12.46px;font-weight:normal;color:#222;transform:scaleX(0.8919);transform-origin:0 0;">Cancel</div>
</body></html>
